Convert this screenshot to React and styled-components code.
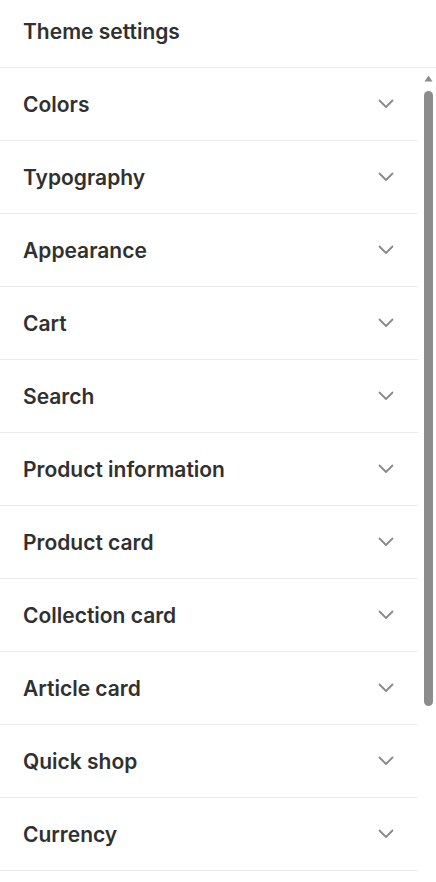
import React from 'react';
import styled, { createGlobalStyle } from 'styled-components';

const GlobalStyle = createGlobalStyle`
  html, body {
    margin: 0;
    padding: 0;
    background: #fff;
  }
  body {
    font-family: Inter, "Noto Sans", sans-serif;
    color: #303030;
  }
`;

const SECTIONS = [
  'Colors',
  'Typography',
  'Appearance',
  'Cart',
  'Search',
  'Product information',
  'Product card',
  'Collection card',
  'Article card',
  'Quick shop',
  'Currency',
];

const Panel = styled.div`
  display: flex;
  flex-direction: column;
  height: 882px;
  background: #fff;
  overflow: hidden;
`;

const Header = styled.div`
  display: flex;
  align-items: center;
  box-sizing: border-box;
  height: 68px;
  padding: 0 23px 5px;
  border-bottom: 1px solid #ebebeb;
  flex-shrink: 0;
  font-size: 21px;
  font-weight: 600;
`;

const ScrollArea = styled.div`
  position: relative;
  flex: 1;
  overflow: hidden;
  padding-right: 18px;
`;

const Row = styled.button`
  display: flex;
  align-items: center;
  justify-content: space-between;
  box-sizing: border-box;
  width: 100%;
  height: 73px;
  padding: 0 24px 0 23px;
  border: none;
  border-bottom: 1px solid #ebebeb;
  background: none;
  font: inherit;
  font-size: 21px;
  font-weight: 600;
  color: #303030;
  text-align: left;
  cursor: pointer;
`;

// drawn scrollbar, sits over the right gutter of the list
const ScrollTrack = styled.div`
  position: absolute;
  top: 0;
  right: 0;
  bottom: 0;
  width: 18px;
  display: flex;
  flex-direction: column;
  align-items: center;
  padding-top: 7px;
  padding-left: 2px;
  box-sizing: border-box;
`;

const ScrollThumb = styled.div`
  margin-top: 9px;
  width: 9px;
  height: 615px;
  border-radius: 5px;
  background: #8c8c8c;
`;

const Chevron = () => (
  <svg width="16" height="10" viewBox="0 0 16 10" fill="none">
    <path d="M1.5 1.5 8 8l6.5-6.5" stroke="#8a8a8a" strokeWidth="1.8" strokeLinecap="round" strokeLinejoin="round" />
  </svg>
);

const UpArrow = () => (
  <svg width="9" height="7" viewBox="0 0 9 7">
    <path d="M4.5 0.5 8.5 6.5H0.5Z" fill="#8c8c8c" />
  </svg>
);

export default function App() {
  return (
    <Panel>
      <GlobalStyle />
      <Header>Theme settings</Header>
      <ScrollArea>
        {SECTIONS.map((name) => (
          <Row key={name}>
            <span>{name}</span>
            <Chevron />
          </Row>
        ))}
        <ScrollTrack>
          <UpArrow />
          <ScrollThumb />
        </ScrollTrack>
      </ScrollArea>
    </Panel>
  );
}
